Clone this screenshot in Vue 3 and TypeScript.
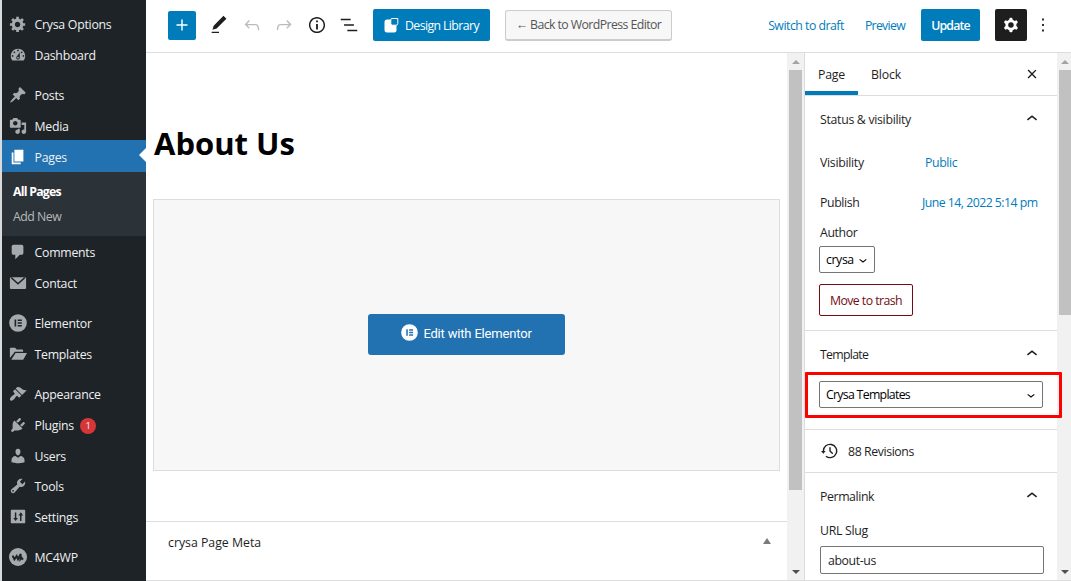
<script setup lang="ts">
interface MenuItem {
  label: string
  icon: string
  gap?: boolean
  active?: boolean
  badge?: number
}

const menu: MenuItem[] = [
  { label: 'Crysa Options', icon: 'generic' },
  { label: 'Dashboard', icon: 'dashboard' },
  { label: 'Posts', icon: 'post', gap: true },
  { label: 'Media', icon: 'media' },
  { label: 'Pages', icon: 'page', active: true },
  { label: 'Comments', icon: 'comments' },
  { label: 'Contact', icon: 'email' },
  { label: 'Elementor', icon: 'elementor', gap: true },
  { label: 'Templates', icon: 'folder' },
  { label: 'Appearance', icon: 'appearance', gap: true },
  { label: 'Plugins', icon: 'plugins', badge: 1 },
  { label: 'Users', icon: 'users' },
  { label: 'Tools', icon: 'tools' },
  { label: 'Settings', icon: 'settings' },
  { label: 'MC4WP', icon: 'mc4wp', gap: true },
]

const icons: Record<string, string> = {
  generic:
    'M18 12h-2.18c-.17.7-.44 1.35-.81 1.93l1.54 1.54-2.1 2.1-1.54-1.54c-.58.36-1.23.63-1.91.79V19H8v-2.18c-.68-.16-1.33-.43-1.91-.79l-1.54 1.54-2.12-2.12 1.54-1.54c-.36-.58-.63-1.23-.79-1.91H1V9.03h2.17c.16-.7.44-1.35.8-1.94L2.43 5.55l2.1-2.1 1.54 1.54c.58-.37 1.24-.64 1.93-.81V2h3v2.18c.68.16 1.33.43 1.91.79l1.54-1.54 2.12 2.12-1.54 1.54c.36.59.64 1.24.8 1.94H18V12zm-8.5 1.5c1.66 0 3-1.34 3-3s-1.34-3-3-3-3 1.34-3 3 1.34 3 3 3z',
  dashboard:
    'M3.76 16h12.48c1.1-1.37 1.76-3.11 1.76-5 0-4.42-3.58-8-8-8s-8 3.58-8 8c0 1.89.66 3.63 1.76 5zM10 4c.55 0 1 .45 1 1s-.45 1-1 1-1-.45-1-1 .45-1 1-1zM6 6c.55 0 1 .45 1 1s-.45 1-1 1-1-.45-1-1 .45-1 1-1zm8 0c.55 0 1 .45 1 1s-.45 1-1 1-1-.45-1-1 .45-1 1-1zm-5.37 5.55L12 7v6c0 1.1-.9 2-2 2s-2-.9-2-2c0-.57.24-1.08.63-1.45zM4 10c.55 0 1 .45 1 1s-.45 1-1 1-1-.45-1-1 .45-1 1-1zm12 0c.55 0 1 .45 1 1s-.45 1-1 1-1-.45-1-1 .45-1 1-1zm-5 3c0-.55-.45-1-1-1s-1 .45-1 1 .45 1 1 1 1-.45 1-1z',
  post:
    'M10.44 3.02l1.82-1.82 6.36 6.35-1.83 1.82c-1.05-.68-2.48-.57-3.41.36l-.75.75c-.92.93-1.04 2.35-.35 3.41l-1.83 1.82-2.41-2.41-2.8 2.79c-.42.42-3.38 2.71-3.8 2.29s1.86-3.39 2.28-3.81l2.79-2.79L4.1 9.36l1.83-1.82c1.05.69 2.48.57 3.4-.36l.75-.75c.93-.92 1.05-2.35.36-3.41z',
  media:
    'M13 11V4c0-.55-.45-1-1-1h-1.67L9 1H5L3.67 3H2c-.55 0-1 .45-1 1v7c0 .55.45 1 1 1h10c.55 0 1-.45 1-1zM7 4.5c1.38 0 2.5 1.12 2.5 2.5S8.38 9.5 7 9.5 4.5 8.38 4.5 7 5.62 4.5 7 4.5zM14 6h5v10.5c0 1.38-1.12 2.5-2.5 2.5S14 17.88 14 16.5s1.12-2.5 2.5-2.5c.17 0 .34.02.5.05V9h-3V6zm-4 8.05V13h2v3.5c0 1.38-1.12 2.5-2.5 2.5S7 17.88 7 16.5 8.12 14 9.5 14c.17 0 .34.02.5.05z',
  page: 'M6 15V2h10v13H6zm-1 1h8v2H3V5h2v11z',
  comments:
    'M5 2h9c1.1 0 2 .9 2 2v7c0 1.1-.9 2-2 2h-2l-5 5v-5H5c-1.1 0-2-.9-2-2V4c0-1.1.9-2 2-2z',
  email:
    'M3.2 3.5h13.6L10 9.6zM3 3.5h-.5C1.7 3.5 1 4.2 1 5v10.2c0 .8.7 1.5 1.5 1.5h15c.8 0 1.5-.7 1.5-1.5V5c0-.8-.7-1.5-1.5-1.5H17l1 1.2-8 7.3-8-7.3z',
  elementor:
    'M10 .2a9.8 9.8 0 1 0 0 19.6A9.8 9.8 0 0 0 10 .2zM6.2 6.2h1.8v7.6H6.2zM9.6 6.2h4.6v1.6H9.6zM9.6 9.2h4.6v1.6H9.6zM9.6 12.2h4.6v1.6H9.6z',
  folder:
    'M1 14.5V4.2C1 3.5 1.5 3 2.2 3h4.6l1.7 2h6c.7 0 1.2.5 1.2 1.2v1.3H6.5zM2.5 16.5 7.3 9H20l-3.7 6.5c-.4.7-.9 1-1.7 1z',
  appearance:
    'M14.48 11.06L7.41 3.99l1.5-1.5c.5-.56 2.3-.47 3.51.32 1.21.8 1.43 1.28 2.91 2.1 1.18.64 2.45 1.26 4.45.85zm-.71.71L6.7 4.7 4.93 6.47c-.39.39-.39 1.02 0 1.41l1.06 1.06c.39.39.39 1.03 0 1.42-.6.6-1.43 1.11-2.21 1.69-.35.26-.7.53-1.01.84C1.43 14.23.4 16.08 1.4 17.07c.99 1 2.84-.03 4.18-1.36.31-.31.58-.66.85-1.02.57-.78 1.08-1.61 1.69-2.21.39-.39 1.02-.39 1.41 0l1.06 1.06c.39.39 1.02.39 1.41 0z',
  plugins:
    'M13.11 4.36L9.87 7.6 8 5.73l3.24-3.24c.35-.34 1.05-.2 1.56.32.52.51.66 1.21.31 1.55zm-8 1.77l.91-1.12 9.01 9.01-1.19.84c-.71.71-2.63 1.16-3.82 1.16H6.14L4.9 17.26c-.59.59-1.54.59-2.12 0-.59-.58-.59-1.53 0-2.12l1.24-1.24v-3.88c0-1.13.4-3.19 1.09-3.89zm7.26 3.97l3.24-3.24c.34-.35 1.04-.21 1.55.31.52.51.66 1.21.31 1.55l-3.24 3.25z',
  users:
    'M10 9.25c-2.27 0-2.73-3.44-2.73-3.44C7 4.02 7.82 2 9.97 2c2.16 0 2.98 2.02 2.71 3.81 0 0-.41 3.44-2.68 3.44zm0 2.57L12.72 10c2.39 0 4.52 2.33 4.52 4.53v2.49s-3.65 1.13-7.24 1.13c-3.65 0-7.24-1.13-7.24-1.13v-2.49c0-2.25 1.94-4.48 4.47-4.48z',
  tools:
    'M16.68 9.77c-1.34 1.34-3.3 1.67-4.95.99l-5.41 6.52c-.99.99-2.59.99-3.58 0s-.99-2.59 0-3.57l6.52-5.42c-.68-1.65-.35-3.61.99-4.95 1.28-1.28 3.12-1.62 4.72-1.06l-2.89 2.89 2.82 2.82 2.86-2.87c.53 1.58.18 3.39-1.08 4.65zM3.81 16.21c.4.39 1.04.39 1.43 0 .4-.4.4-1.04 0-1.43-.39-.4-1.03-.4-1.43 0-.39.39-.39 1.03 0 1.43z',
  settings:
    'M3 2h14c.6 0 1 .4 1 1v13c0 .6-.4 1-1 1H3c-.6 0-1-.4-1-1V3c0-.6.4-1 1-1zM6.5 5v6H4.7l2.6 3.5L9.900 11H8.100V5zM12.3 14.5V8.2h-1.8l2.6-3.5 2.6 3.5h-1.8v6.3z',
  mc4wp: 'M10 0a10 10 0 1 0 0 20 10 10 0 0 0 0-20z',
}

const toolbar = [
  { name: 'edit', path: 'M20.1 5.1L16.9 2 6.2 12.7l-1.3 4.4 4.5-1.3L20.1 5.1zM4 20.8h8v-1.5H4v1.5z' },
  {
    name: 'undo',
    muted: true,
    path: 'M18.3 11.7c-.6-.6-1.4-.9-2.3-.9H6.7l2.9-3.3-1.1-1-4.5 5L8.5 16l1-1-2.7-2.7H16c.5 0 .9.2 1.3.5 1 1 1 3.4 1 4.5v.3h1.5v-.2c0-1.5 0-4.3-1.5-5.7z',
  },
  {
    name: 'redo',
    muted: true,
    path: 'M15.6 6.5l-1.1 1 2.9 3.3H8c-.9 0-1.7.3-2.3.9-1.4 1.5-1.4 4.2-1.4 5.6v.2h1.5v-.3c0-1.1 0-3.5 1-4.5.3-.3.7-.5 1.3-.5h9.2L14.5 15l1.1 1.1 4.6-4.6-4.6-5z',
  },
  {
    name: 'info',
    path: 'M12 3.2c-4.8 0-8.8 3.9-8.8 8.8 0 4.8 3.9 8.8 8.8 8.8 4.8 0 8.8-3.9 8.8-8.8 0-4.8-4-8.8-8.8-8.8zm0 16c-4 0-7.2-3.3-7.2-7.2C4.8 8 8 4.8 12 4.8s7.2 3.3 7.2 7.2c0 4-3.2 7.2-7.2 7.2zM11 17h2v-6h-2v6zm0-8h2V7h-2v2z',
  },
  { name: 'list', path: 'M13.8 5.2H3v1.5h10.8V5.2zm-3.6 12v1.5H21v-1.5H10.2zm7.2-6H6.6v1.5h10.8v-1.5z' },
]

const chevronUp = 'M6.5 12.4L12 8l5.5 4.4-.9 1.2L12 10l-4.5 3.6-1-1.2z'
const chevronDown = 'M17.5 11.6L12 16l-5.5-4.4.9-1.2L12 14l4.5-3.6 1 1.2z'
const cog =
  'M10.289 4.836A1 1 0 0111.275 4h1.306a1 1 0 01.987.836l.244 1.466c.787.26 1.503.679 2.108 1.218l1.393-.522a1 1 0 011.216.437l.653 1.13a1 1 0 01-.23 1.273l-1.148.944a6.025 6.025 0 010 2.435l1.149.946a1 1 0 01.23 1.272l-.653 1.13a1 1 0 01-1.216.437l-1.394-.522c-.605.54-1.32.958-2.108 1.218l-.244 1.466a1 1 0 01-.987.836h-1.306a1 1 0 01-.986-.836l-.244-1.466a5.995 5.995 0 01-2.108-1.218l-1.394.522a1 1 0 01-1.217-.436l-.653-1.131a1 1 0 01.23-1.272l1.149-.946a6.026 6.026 0 010-2.435l-1.148-.944a1 1 0 01-.23-1.272l.653-1.131a1 1 0 011.217-.437l1.393.522a5.994 5.994 0 012.108-1.218l.244-1.466zM14.929 12a3 3 0 11-6 0 3 3 0 016 0z'
</script>

<template>
  <div class="screen">
    <div class="edge"></div>
    <nav class="sidebar">
      <template v-for="item in menu" :key="item.label">
        <div class="item" :class="{ gap: item.gap, active: item.active }">
          <svg class="dash" viewBox="0 0 20 20">
            <path :d="icons[item.icon]" fill-rule="evenodd" />
            <path v-if="item.icon === 'mc4wp'" class="scribble" d="M4 8.500l2 4 2.500-3.500 1.500 3.500 3-6-.3 6 1.300-1.500 1.500 2" />
          </svg>
          <span class="name">{{ item.label }}</span>
          <span v-if="item.badge" class="badge">{{ item.badge }}</span>
        </div>
        <div v-if="item.active" class="submenu">
          <strong>All Pages</strong>
          <span>Add New</span>
        </div>
      </template>
    </nav>

    <div class="editor">
      <header class="topbar">
        <button class="add">
          <svg viewBox="0 0 24 24"><path d="M18 11.2h-5.2V6h-1.6v5.2H6v1.6h5.2V18h1.6v-5.2H18z" /></svg>
        </button>
        <div class="toolset">
          <svg v-for="t in toolbar" :key="t.name" :class="{ muted: t.muted }" viewBox="0 0 24 24">
            <path :d="t.path" />
          </svg>
        </div>
        <button class="library">
          <svg viewBox="0 0 16 16">
            <path d="M3 2.500H12.500V13Q12.500 15.500 10 15.500H3Q.5 15.500 .5 13V5Q.5 2.500 3 2.500z" />
            <path class="outline" d="M8 1.500H13.800V6.500Q13.800 8.200 12.100 8.200H8.500Q6.800 8.200 6.800 6.500V2.700Q6.800 1.500 8 1.500z" />
          </svg>
          <span>Design Library</span>
        </button>
        <button class="back"><span>← Back to WordPress Editor</span></button>
        <div class="actions">
          <a class="draft">Switch to draft</a>
          <a class="preview">Preview</a>
          <button class="update"><span>Update</span></button>
          <button class="cog"><svg viewBox="0 0 24 24"><path fill-rule="evenodd" :d="cog" /></svg></button>
          <svg class="more" viewBox="0 0 24 24"><path d="M13 19h-2v-2h2v2zm0-6h-2v-2h2v2zm0-6h-2V5h2v2z" /></svg>
        </div>
      </header>

      <div class="body">
        <main class="canvas">
          <h1>About Us</h1>
          <div class="placeholder">
            <button class="elementor-btn">
              <svg viewBox="0 0 20 20"><path :d="icons.elementor" fill-rule="evenodd" /></svg>
              <span>Edit with Elementor</span>
            </button>
          </div>
          <div class="metabox">
            <span>crysa Page Meta</span>
            <i class="tri"></i>
          </div>
        </main>
        <div class="scroll scroll-main">
          <i class="arrow up"></i>
          <div class="thumb"></div>
          <i class="arrow down"></i>
        </div>

        <aside class="panel">
          <div class="tabs">
            <div class="tab current"><span>Page</span></div>
            <div class="tab"><span>Block</span></div>
            <svg class="close" viewBox="0 0 24 24">
              <path d="M12 13.06l3.712 3.713 1.061-1.06L13.061 12l3.712-3.712-1.06-1.06L12 10.938 8.288 7.227l-1.061 1.06L10.939 12l-3.712 3.712 1.06 1.061L12 13.061z" />
            </svg>
          </div>

          <section class="status">
            <div class="heading">
              <h2>Status &amp; visibility</h2>
              <svg viewBox="0 0 24 24"><path :d="chevronUp" /></svg>
            </div>
            <div class="row visibility"><span>Visibility</span><a>Public</a></div>
            <div class="row publish"><span>Publish</span><a>June 14, 2022 5:14 pm</a></div>
            <div class="label">Author</div>
            <div class="select author">
              <span>crysa</span>
              <svg viewBox="0 0 24 24"><path :d="chevronDown" /></svg>
            </div>
            <button class="trash"><span>Move to trash</span></button>
          </section>

          <section class="template">
            <div class="heading">
              <h2>Template</h2>
              <svg viewBox="0 0 24 24"><path :d="chevronUp" /></svg>
            </div>
            <div class="select wide">
              <span>Crysa Templates</span>
              <svg viewBox="0 0 24 24"><path :d="chevronDown" /></svg>
            </div>
            <div class="highlight"></div>
          </section>

          <section class="revisions">
            <svg viewBox="0 0 24 24">
              <path d="M5.5 12h1.75l-2.5 3-2.5-3H4a8 8 0 113.134 6.35l.907-1.194A6.5 6.5 0 105.5 12zm9.53 1.97l-2.28-2.28V8.5a.75.75 0 00-1.5 0V12a.747.747 0 00.218.529l2.5 2.5a.75.75 0 101.06-1.061z" />
            </svg>
            <h2>88 Revisions</h2>
          </section>

          <section class="permalink">
            <div class="heading">
              <h2>Permalink</h2>
              <svg viewBox="0 0 24 24"><path :d="chevronUp" /></svg>
            </div>
            <div class="label slug">URL Slug</div>
            <div class="input"><span>about-us</span></div>
          </section>
        </aside>
        <div class="scroll scroll-side">
          <i class="arrow up"></i>
          <div class="thumb"></div>
          <i class="arrow down"></i>
        </div>
      </div>
    </div>
  </div>
</template>

<style>
body {
  overflow: hidden;
}
</style>

<style scoped>
* {
  box-sizing: border-box;
}
.screen {
  display: flex;
  width: 1071px;
  height: 581px;
  overflow: hidden;
  background: #fff;
  color: #1e1e1e;
  font: 12.3px/18px 'Open Sans', 'Noto Sans', sans-serif;
}
button {
  display: flex;
  align-items: center;
  justify-content: center;
  padding: 0;
  border: 0;
  font: inherit;
  letter-spacing: inherit;
}
svg {
  display: block;
  flex: none;
  fill: currentColor;
}
span,
a,
h2 {
  white-space: nowrap;
}
h2 {
  margin: 0;
  font-size: 12.3px;
  font-weight: 500;
}

.edge {
  width: 2px;
  background: #d9dadb;
}
.sidebar {
  width: 144px;
  height: 581px;
  padding-top: 8px;
  background: #1d2327;
  color: #f0f0f1;
  letter-spacing: -0.25px;
}
.item {
  display: flex;
  align-items: center;
  position: relative;
  height: 30.7px;
  padding: 2px 0 0 7px;
}
.item.gap {
  margin-top: 9.6px;
}
.name {
  margin-top: 2px;
}
.dash {
  width: 18px;
  height: 18px;
  margin-right: 7.5px;
  color: #a7aaad;
}
.scribble {
  fill: none;
  stroke: #1d2327;
  stroke-width: 2.2;
}
.item.active {
  height: 31.7px;
  background: #2271b1;
}
.active .dash {
  color: #fff;
}
.active::after {
  content: '';
  position: absolute;
  right: 0;
  top: 8px;
  border: 7.5px solid transparent;
  border-left: 0;
  border-right: 7px solid #fff;
}
.badge {
  width: 16px;
  height: 16px;
  margin: 1px 0 0 6px;
  border-radius: 50%;
  background: #d63638;
  font-size: 9.5px;
  line-height: 16px;
  text-align: center;
}
.submenu {
  display: flex;
  flex-direction: column;
  height: 64px;
  padding: 7px 0 0 11px;
  background: #2c3338;
  line-height: 25px;
  letter-spacing: -0.5px;
  color: #b4b7ba;
}
.submenu strong {
  color: #fff;
  font-size: 12.3px;
  letter-spacing: -0.75px;
}

.editor {
  width: 925px;
}
.topbar {
  display: flex;
  align-items: center;
  height: 53px;
  padding-left: 22px;
  padding-bottom: 2px;
  border-bottom: 1px solid #ddd;
  letter-spacing: -0.5px;
}
.topbar span,
.topbar a {
  margin-top: 2px;
}
.add {
  width: 28px;
  height: 29px;
  border-radius: 2px;
  background: #007cba;
  color: #fff;
}
.add svg {
  width: 22px;
  height: 22px;
}
.toolset {
  display: flex;
  gap: 10.5px;
  margin-left: 12px;
}
.toolset svg {
  width: 22px;
  height: 22px;
}
.toolset .muted {
  color: #bbb;
}
.library {
  width: 117px;
  height: 32px;
  margin-left: 13px;
  border-radius: 2px;
  background: #007cba;
  color: #fff;
  font-weight: 500;
  letter-spacing: -0.6px;
}
.library svg {
  width: 16px;
  height: 16px;
  margin-right: 5px;
}
.outline {
  fill: #007cba;
  stroke: #fff;
  stroke-width: 1;
}
.back {
  width: 167px;
  height: 31px;
  margin-left: 15px;
  border: 1px solid #ccc;
  border-bottom-width: 2px;
  border-radius: 3px;
  background: #f7f7f7;
  color: #555;
  letter-spacing: -0.58px;
}
.back span {
  margin-top: 1px;
}
.actions {
  display: flex;
  align-items: center;
  margin-left: auto;
  color: #007cba;
}
.preview {
  margin-left: 21px;
  letter-spacing: -0.7px;
}
.update {
  width: 59px;
  height: 32px;
  margin-left: 16px;
  border-radius: 2px;
  background: #007cba;
  color: #fff;
  font-weight: 600;
  letter-spacing: -0.8px;
}
.cog {
  width: 32px;
  height: 32px;
  margin-left: 15px;
  border-radius: 2px;
  background: #1e1e1e;
  color: #fff;
}
.cog svg {
  width: 22px;
  height: 22px;
}
.more {
  width: 22px;
  height: 22px;
  margin: 0 17px 0 5px;
  color: #1e1e1e;
}

.body {
  display: flex;
  height: 528px;
  border-bottom: 1px solid #ddd;
}
.canvas {
  width: 641px;
}
h1 {
  margin: 68px 0 0 8px;
  color: #000;
  font-size: 31px;
  font-weight: 700;
  line-height: 44px;
}
.placeholder {
  display: flex;
  align-items: center;
  justify-content: center;
  width: 627px;
  height: 272px;
  margin: 34px 0 0 7px;
  padding-bottom: 2px;
  border: 1px solid #ddd;
  background: #f7f7f7;
}
.elementor-btn {
  width: 197px;
  height: 41px;
  border-radius: 3px;
  background: #2271b1;
  color: #fff;
  font: 400 13px/18px Roboto, sans-serif;
  letter-spacing: -0.18px;
}
.elementor-btn svg {
  width: 17px;
  height: 17px;
  margin: -3px 5px 0 0;
}
.elementor-btn span {
  margin-top: -1px;
}
.metabox {
  display: flex;
  align-items: center;
  justify-content: space-between;
  height: 43px;
  margin-top: 50px;
  padding: 0 16px 0 22px;
  border-top: 1px solid #ddd;
}
.tri {
  margin-top: -4px;
  border: 4px solid transparent;
  border-top: 0;
  border-bottom: 6px solid #787c82;
}

.scroll {
  display: flex;
  flex-direction: column;
  align-items: center;
  background: #f1f1f1;
}
.scroll-main {
  width: 17px;
}
.scroll-side {
  width: 14px;
}
.thumb {
  background: #c1c1c1;
}
.scroll-main .thumb {
  width: 13px;
  height: 420px;
}
.scroll-side .thumb {
  align-self: flex-end;
  width: 12px;
  height: 245px;
}
.arrow {
  border: 4px solid transparent;
}
.up {
  margin: 7px 0 6px;
  border-top: 0;
  border-bottom-color: #a3a3a3;
}
.down {
  margin: auto 0 6px;
  border-bottom: 0;
  border-top-color: #505050;
}
.scroll-side .arrow {
  margin-left: 2px;
}

.panel {
  width: 253px;
  border-left: 1px solid #ddd;
  letter-spacing: -0.4px;
}
.tabs {
  display: flex;
  align-items: center;
  height: 43px;
  border-bottom: 1px solid #ddd;
  font-weight: 500;
  letter-spacing: -0.2px;
}
.tab {
  display: flex;
  align-items: center;
  justify-content: center;
  width: 53px;
  height: 42px;
  padding-top: 2px;
}
.current {
  border-bottom: 4px solid #007cba;
  padding-top: 6px;
}
.tab + .tab {
  width: 56px;
}
.close {
  width: 22px;
  height: 22px;
  margin: 0 14px 0 auto;
}
section {
  padding: 0 14px;
  border-bottom: 1px solid #ddd;
}
.heading {
  display: flex;
  align-items: center;
  justify-content: space-between;
  height: 45px;
}
.heading h2 {
  margin: 2px 0 0 1px;
}
.heading svg {
  width: 22px;
  height: 22px;
}
.status {
  height: 235px;
}
.status h2 {
  letter-spacing: -0.3px;
}
.row {
  display: flex;
  align-items: center;
  height: 40px;
}
.row span {
  flex: none;
  width: 102px;
  padding-left: 1px;
}
.row a {
  color: #007cba;
}
.visibility {
  height: 41px;
  margin-top: 1px;
}
.visibility span {
  letter-spacing: -0.3px;
}
.visibility a {
  padding: 1px 0 0 4px;
}
.publish {
  height: 39px;
}
.publish a {
  padding-left: 1px;
  letter-spacing: -0.53px;
}
.label {
  height: 22px;
  padding-left: 1px;
  line-height: 22px;
}
.select {
  display: flex;
  align-items: center;
  justify-content: space-between;
  height: 27px;
  padding: 0 3px 0 6px;
  border: 1px solid #757575;
  border-radius: 2px;
  color: #000;
}
.select svg {
  width: 16px;
  height: 16px;
}
.author {
  width: 56px;
  margin-top: 2px;
}
.trash {
  width: 94px;
  height: 32px;
  margin-top: 11px;
  padding-top: 2px;
  border: 1px solid #710d12;
  border-radius: 2px;
  background: #fff;
  color: #710d12;
  letter-spacing: -0.55px;
}
.template {
  position: relative;
  height: 99px;
  letter-spacing: -0.7px;
}
.template .heading h2 {
  margin-top: 3px;
}
.wide {
  width: 224px;
  margin-top: 5px;
}
.highlight {
  position: absolute;
  z-index: 1;
  left: 0;
  top: 41px;
  width: 257px;
  height: 46px;
  border: 3px solid #f00;
  border-radius: 1px;
}
.revisions {
  display: flex;
  align-items: center;
  height: 43px;
}
.revisions h2 {
  margin-top: 2px;
}
.revisions svg {
  width: 22px;
  height: 22px;
  margin-right: 7px;
}
.permalink {
  border-bottom: 0;
}
.permalink .label {
  margin-top: 2px;
  letter-spacing: -0.3px;
}
.input {
  display: flex;
  align-items: center;
  width: 224px;
  height: 28px;
  margin: 4px 0 0 1px;
  padding: 2px 0 0 7px;
  border: 1px solid #757575;
  border-radius: 2px;
}
</style>
